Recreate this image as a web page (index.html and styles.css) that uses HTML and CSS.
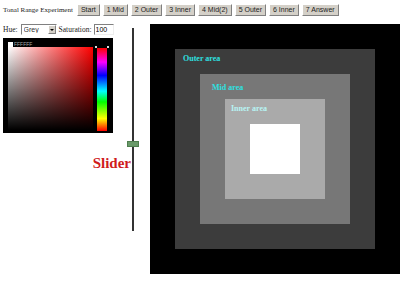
FILE: index.html
```html
<!DOCTYPE html>
<html lang="en">
<head>
  <meta charset="UTF-8">
  <title>Tonal Range Experiment</title>
  <link rel="stylesheet" href="styles.css">
</head>
<body>
  <div class="toolbar">
    <span class="title">Tonal Range Experiment</span>
    <button class="btn">Start</button>
    <button class="btn">1 Mid</button>
    <button class="btn">2 Outer</button>
    <button class="btn">3 Inner</button>
    <button class="btn">4 Mid(2)</button>
    <button class="btn">5 Outer</button>
    <button class="btn">6 Inner</button>
    <button class="btn">7 Answer</button>
  </div>

  <div class="main">
    <div class="left">
      <div class="hue-row">
        <label for="hue">Hue:</label>
        <span class="select">
          <select id="hue">
            <option>Grey</option>
          </select>
          <span class="select-btn"></span>
        </span>
        <label for="sat">Saturation:</label>
        <input type="text" id="sat" class="sat" value="100">
      </div>

      <div class="picker">
        <span class="marker"><i></i>FFFFFF</span>
        <div class="sv"></div>
        <div class="hue-bar">
          <span class="dot dot-l"></span>
          <span class="dot dot-r"></span>
        </div>
      </div>

      <div class="slider-label">Slider</div>
    </div>

    <div class="track">
      <span class="thumb"></span>
    </div>

    <div class="canvas">
      <div class="sq outer">
        <div class="sq-label">Outer area</div>
        <div class="sq mid">
          <div class="sq-label">Mid area</div>
          <div class="sq inner">
            <div class="sq-label">Inner area</div>
            <div class="centre"></div>
          </div>
        </div>
      </div>
    </div>
  </div>
</body>
</html>
```

FILE: styles.css
```css
* {
  box-sizing: border-box;
}

body {
  margin: 0;
  padding: 3px 3px 0 2px;
  font-family: 'Liberation Serif', serif;
  font-size: 7.5px;
  color: #222;
  background: #fff;
}

.toolbar {
  display: flex;
  align-items: center;
  gap: 3px;
  height: 13px;
}

.title {
  margin-left: 1px;
  margin-right: 1px;
  font-size: 7px;
}

.btn {
  height: 12px;
  padding: 0 3px;
  font-family: 'Liberation Sans', sans-serif;
  font-size: 7px;
  line-height: 10px;
  color: #222;
  background: #d4d0c8;
  border: 1px solid;
  border-color: #fff #808080 #808080 #fff;
  border-radius: 0;
}

.main {
  display: flex;
  margin-top: 8px;
}

/* left column: hue controls, picker, label */
.left {
  width: 125px;
  padding-left: 1px;
}

.hue-row {
  display: flex;
  align-items: center;
  gap: 2px;
  height: 11px;
}

.select {
  display: flex;
  width: 36px;
  height: 11px;
  margin-left: 1px;
  border: 1px solid;
  border-color: #808080 #fff #fff #808080;
  background: #fff;
}

.select select {
  flex: 1;
  min-width: 0;
  -webkit-appearance: none;
  appearance: none;
  border: none;
  padding: 0 2px;
  font-family: 'Liberation Sans', sans-serif;
  font-size: 7px;
  color: #333;
  background: #fff;
  outline: none;
}

.select-btn {
  width: 8px;
  background: #d4d0c8;
  border: 1px solid;
  border-color: #fff #808080 #808080 #fff;
  display: flex;
  align-items: center;
  justify-content: center;
}

.select-btn::after {
  content: '';
  border-left: 2px solid transparent;
  border-right: 2px solid transparent;
  border-top: 2px solid #000;
}

.sat {
  width: 20px;
  height: 11px;
  padding: 0 1px;
  font-family: 'Liberation Sans', sans-serif;
  font-size: 7px;
  border: 1px solid;
  border-color: #808080 #eee #eee #808080;
}

.picker {
  position: relative;
  display: flex;
  gap: 4px;
  width: 110px;
  height: 95px;
  margin-top: 3px;
  padding: 9px 0 3px 5px;
  background: #000;
}

.sv {
  width: 85px;
  height: 83px;
  background:
    linear-gradient(to bottom, rgba(0, 0, 0, 0), #000),
    linear-gradient(to right, #fff, #f00);
}

.hue-bar {
  position: relative;
  width: 10px;
  height: 83px;
  margin-top: 1px;
  background: linear-gradient(to bottom, #f00, #f0f 17%, #00f 33%, #0ff 52%, #0f0 65%, #ff0 85%, #f00);
}

.dot {
  position: absolute;
  top: -2px;
  width: 2px;
  height: 2px;
  background: #ddd;
}

.dot-l { left: -2px; }
.dot-r { right: -2px; }

.marker {
  position: absolute;
  top: 3px;
  left: 5px;
  display: flex;
  align-items: center;
  gap: 1px;
  font-family: 'Liberation Sans', sans-serif;
  font-size: 5px;
  color: #aaa;
}

.marker i {
  width: 5px;
  height: 5px;
  background: #fff;
}

.slider-label {
  margin-top: 23px;
  margin-right: -4px;
  text-align: right;
  font-size: 15px;
  font-weight: bold;
  line-height: 15px;
  color: #d01c1c;
}

/* vertical slider */
.track {
  position: relative;
  width: 12px;
  height: 203px;
  margin-top: 4px;
}

.track::before {
  content: '';
  display: block;
  width: 2px;
  height: 100%;
  margin: 0 auto;
  background: #333;
}

.thumb {
  position: absolute;
  top: 113px;
  left: 0;
  width: 12px;
  height: 6px;
  background: #6a9a6a;
  border: 1px solid #4f7f4f;
}

/* nested tonal squares */
.canvas {
  width: 250px;
  height: 250px;
  margin-left: 11px;
  padding: 25px;
  background: #000;
}

.sq {
  padding: 0 25px 25px;
}

.sq-label {
  height: 25px;
  margin: 0 -25px;
  font-weight: bold;
  font-size: 8px;
  line-height: 8px;
  color: #2ee0e0;
}

.outer { background: #3c3c3c; }
.outer > .sq-label { padding: 6px 0 0 8px; }

.mid { background: #777; }
.mid > .sq-label { padding: 10px 0 0 12px; }

.inner { background: #aaa; }
.inner > .sq-label { padding: 6px 0 0 6px; color: #b8f4f4; }

.centre {
  height: 50px;
  background: #fff;
}
```
